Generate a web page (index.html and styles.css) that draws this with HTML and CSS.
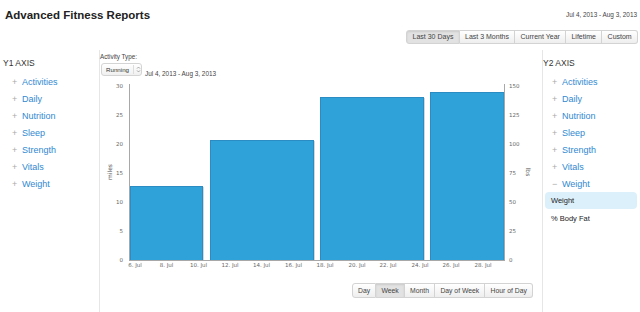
FILE: index.html
```html
<!DOCTYPE html>
<html lang="en">
<head>
  <meta charset="UTF-8" />
  <title>Advanced Fitness Reports</title>
  <link rel="stylesheet" href="styles.css">
</head>
<body>
  <div class="header">
    <h1 class="title">Advanced Fitness Reports</h1>
    <span class="range-date">Jul 4, 2013 - Aug 3, 2013</span>
  </div>

  <div class="ranges">
    <div class="btn-group">
      <button class="btn active">Last 30 Days</button>
      <button class="btn">Last 3 Months</button>
      <button class="btn">Current Year</button>
      <button class="btn">Lifetime</button>
      <button class="btn">Custom</button>
    </div>
  </div>

  <div class="main">
    <div class="axis-col left">
      <h3 class="axis-title">Y1 AXIS</h3>
      <ul class="axis-list">
        <li><span class="sign">+</span><a>Activities</a></li>
        <li><span class="sign">+</span><a>Daily</a></li>
        <li><span class="sign">+</span><a>Nutrition</a></li>
        <li><span class="sign">+</span><a>Sleep</a></li>
        <li><span class="sign">+</span><a>Strength</a></li>
        <li><span class="sign">+</span><a>Vitals</a></li>
        <li><span class="sign">+</span><a>Weight</a></li>
      </ul>
    </div>

    <div class="chart-col">
      <div class="activity-label">Activity Type:</div>
      <div class="activity-row">
        <div class="select">
          <span class="select-text">Running</span>
          <span class="select-arrows">
            <svg width="5" height="7" viewBox="0 0 5 7">
              <path d="M1 2.6 L2.5 1 L4 2.6 M1 4.4 L2.5 6 L4 4.4" fill="none" stroke="#888" stroke-width="0.7"/>
            </svg>
          </span>
        </div>
        <span class="chart-date">Jul 4, 2013 - Aug 3, 2013</span>
      </div>

      <svg class="chart" width="442" height="200" viewBox="100 78 442 200">
        <!-- bars (week totals) -->
        <g class="shadow">
          <rect x="132" y="187" width="72" height="73"/>
          <rect x="212" y="141" width="103" height="119"/>
          <rect x="322" y="98" width="103" height="162"/>
        </g>
        <g class="bars">
          <rect x="130.5" y="186.5" width="72" height="74"/>
          <rect x="210.5" y="140.5" width="103" height="120"/>
          <rect x="320.5" y="97.5" width="103" height="163"/>
          <rect x="430.5" y="92.5" width="73.5" height="168"/>
        </g>

        <!-- axes -->
        <g class="axis-line">
          <line x1="129.5" y1="84" x2="129.5" y2="261"/>
          <line x1="504.5" y1="84" x2="504.5" y2="261"/>
          <line x1="129" y1="260.5" x2="505" y2="260.5"/>
        </g>

        <g class="tick-label" text-anchor="end">
          <text x="123" y="88">30</text>
          <text x="123" y="117">25</text>
          <text x="123" y="146">20</text>
          <text x="123" y="175">15</text>
          <text x="123" y="204">10</text>
          <text x="123" y="233">5</text>
          <text x="123" y="262">0</text>
        </g>
        <g class="tick-label" text-anchor="start">
          <text x="509" y="88">150</text>
          <text x="509" y="117">125</text>
          <text x="509" y="146">100</text>
          <text x="509" y="175">75</text>
          <text x="509" y="204">50</text>
          <text x="509" y="233">25</text>
          <text x="509" y="262">0</text>
        </g>
        <g class="tick-label" text-anchor="middle">
          <text x="135" y="267">6. Jul</text>
          <text x="166.5" y="267">8. Jul</text>
          <text x="198.5" y="267">10. Jul</text>
          <text x="230" y="267">12. Jul</text>
          <text x="261.5" y="267">14. Jul</text>
          <text x="293.5" y="267">16. Jul</text>
          <text x="325" y="267">18. Jul</text>
          <text x="357" y="267">20. Jul</text>
          <text x="388" y="267">22. Jul</text>
          <text x="420" y="267">24. Jul</text>
          <text x="451" y="267">26. Jul</text>
          <text x="483" y="267">28. Jul</text>
        </g>

        <text class="axis-name" text-anchor="middle" transform="translate(112 172) rotate(-90)">miles</text>
        <text class="axis-name" text-anchor="middle" transform="translate(526 172) rotate(90)">lbs</text>
      </svg>

      <div class="group-by">
        <div class="btn-group small">
          <button class="btn">Day</button>
          <button class="btn active">Week</button>
          <button class="btn">Month</button>
          <button class="btn">Day of Week</button>
          <button class="btn">Hour of Day</button>
        </div>
      </div>
    </div>

    <div class="axis-col right">
      <h3 class="axis-title">Y2 AXIS</h3>
      <ul class="axis-list">
        <li><span class="sign">+</span><a>Activities</a></li>
        <li><span class="sign">+</span><a>Daily</a></li>
        <li><span class="sign">+</span><a>Nutrition</a></li>
        <li><span class="sign">+</span><a>Sleep</a></li>
        <li><span class="sign">+</span><a>Strength</a></li>
        <li><span class="sign">+</span><a>Vitals</a></li>
        <li><span class="sign">&minus;</span><a>Weight</a></li>
      </ul>
      <ul class="sub-list">
        <li class="selected">Weight</li>
        <li>% Body Fat</li>
      </ul>
    </div>
  </div>
</body>
</html>
```

FILE: styles.css
```css
body {
  margin: 0;
  font-family: "Liberation Sans", Arial, sans-serif;
  color: #333;
  background: #fff;
  width: 640px;
  height: 312px;
  overflow: hidden;
}

/* top bar */
.header {
  display: flex;
  justify-content: space-between;
  align-items: center;
  padding: 8px 3px 0 5px;
}
.title {
  margin: 0;
  font-size: 11.5px;
  line-height: 14px;
  font-weight: bold;
  color: #222;
}
.range-date {
  font-size: 6.4px;
  color: #444;
  margin-top: -2px;
}

.ranges {
  display: flex;
  justify-content: flex-end;
  padding-right: 2px;
  margin-top: 8px;
}

/* button groups */
.btn-group {
  display: flex;
}
.btn {
  font-family: "Liberation Sans", Arial, sans-serif;
  font-size: 7px;
  color: #444;
  height: 14px;
  line-height: 12px;
  padding: 0 5.3px;
  margin: 0;
  border: 1px solid #d3d3d3;
  border-left: none;
  background: linear-gradient(#ffffff, #eeeeee);
  cursor: pointer;
}
.btn:first-child {
  border-left: 1px solid #d3d3d3;
  border-radius: 3px 0 0 3px;
}
.btn:last-child {
  border-radius: 0 3px 3px 0;
}
.btn.active {
  background: #e2e2e2;
  box-shadow: inset 0 1px 2px rgba(0,0,0,0.1);
}
.btn-group.small .btn {
  font-size: 6.8px;
  height: 15px;
  line-height: 13px;
  padding: 0 5.2px;
}

/* three columns */
.main {
  display: flex;
  margin-top: 6px;
  height: 262px;
}
.axis-col {
  box-sizing: border-box;
}
.axis-col.left {
  width: 99px;
  padding: 7px 0 0 3px;
}
.axis-col.right {
  width: 97px;
  padding: 7px 0 0 0;
}
.axis-title {
  margin: 0 0 5px 0;
  font-size: 8.5px;
  line-height: 12px;
  font-weight: normal;
  color: #333;
}
.axis-list {
  list-style: none;
  margin: 0;
  padding: 0 0 0 9px;
}
.axis-list li {
  display: flex;
  align-items: center;
  height: 16.9px;
  font-size: 9px;
}
.axis-list .sign {
  width: 10px;
  color: #aaa;
  font-size: 9px;
}
.axis-list a {
  color: #3189d2;
}

.sub-list {
  list-style: none;
  margin: 0 3px 0 2px;
  padding: 0;
}
.sub-list li {
  height: 17px;
  line-height: 17px;
  padding-left: 6px;
  margin-bottom: 1px;
  font-size: 7.5px;
  color: #222;
  border-radius: 4px;
}
.sub-list li.selected {
  background: #dcf0fb;
}

/* chart column */
.chart-col {
  flex: 1;
  border-left: 1px solid #e6e6e6;
  border-right: 1px solid #e6e6e6;
  padding-top: 3px;
}
.activity-label {
  font-size: 6.3px;
  line-height: 8px;
  color: #444;
}
.activity-row {
  display: flex;
  align-items: flex-end;
  height: 15px;
  margin-top: 2px;
}
.select {
  display: flex;
  align-items: center;
  box-sizing: border-box;
  width: 41px;
  height: 13px;
  margin-left: 1px;
  border: 1px solid #d4d4d4;
  border-radius: 3px;
  background: linear-gradient(#ffffff, #f0f0f0);
  align-self: flex-start;
}
.select-text {
  font-size: 6.2px;
  color: #333;
  padding-left: 4px;
  width: 29px;
}
.select-arrows {
  display: flex;
  align-items: center;
  height: 9px;
  padding-left: 2px;
  border-left: 1px solid #ddd;
}
.chart-date {
  font-size: 6.4px;
  color: #444;
  margin-left: 3px;
  margin-bottom: 1px;
}

.chart {
  display: block;
}
.chart .bars rect {
  fill: #2fa2da;
  stroke: #2a8cc2;
  stroke-width: 1;
}
.chart .shadow rect {
  fill: #d6d6d6;
}
.chart .axis-line line {
  stroke: #a8a8a8;
  stroke-width: 1;
}
.chart .tick-label text {
  font-family: "DejaVu Sans", Verdana, sans-serif;
  font-size: 5.5px;
  fill: #666;
}
.chart .axis-name {
  font-family: "DejaVu Sans", Verdana, sans-serif;
  font-size: 6px;
  fill: #555;
}

.group-by {
  display: flex;
  justify-content: flex-end;
  padding-right: 9px;
  margin-top: 5px;
}
```
